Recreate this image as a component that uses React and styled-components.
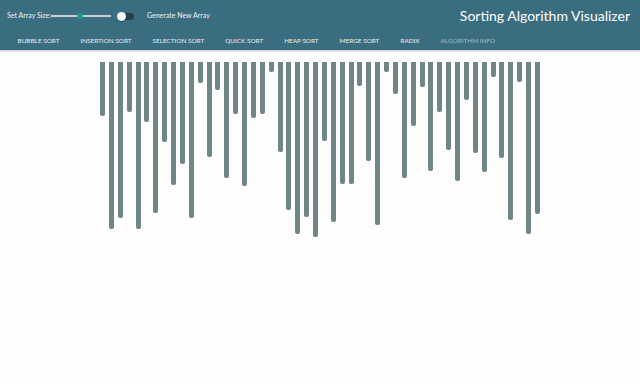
import styled, { createGlobalStyle } from "styled-components";

const GlobalStyle = createGlobalStyle`
  body {
    margin: 0;
    background: #fdfdfd;
    font-family: "Lato", "Open Sans", sans-serif;
  }
`;

const HEIGHTS = [
  54, 167, 156, 50, 167, 60, 151, 80, 123, 102, 156, 21, 95, 28, 116, 52,
  124, 56, 52, 10, 90, 148, 172, 155, 175, 79, 160, 122, 122, 24, 99, 163, 10,
  32, 116, 64, 25, 109, 50, 88, 119, 38, 91, 110, 15, 96, 158, 20, 172, 152,
];

const TABS = [
  "Bubble Sort",
  "Insertion Sort",
  "Selection Sort",
  "Quick Sort",
  "Heap Sort",
  "Merge Sort",
  "Radix",
];

const Header = styled.header`
  height: 50px;
  background-color: #3b6d80;
  box-shadow: 0 1px 2px rgba(0, 0, 0, 0.25);
  display: flex;
  flex-direction: column;
  color: #fff;
`;

const TopRow = styled.div`
  height: 30px;
  display: flex;
  align-items: center;
  padding: 0 10px 0 7px;
`;

const Label = styled.span`
  font-size: 7px;
  color: #eef3f5;
  white-space: nowrap;
`;

const Slider = styled.div`
  position: relative;
  width: 60px;
  height: 2px;
  margin: 2px 0 0 0;
  background: #c9d3d6;
`;

const Thumb = styled.span`
  position: absolute;
  top: -2px;
  left: ${(p) => p.$pos}px;
  width: 6px;
  height: 6px;
  border-radius: 50%;
  background: #1f9c8c;
`;

const Toggle = styled.div`
  position: relative;
  width: 16px;
  height: 7px;
  margin: 2px 0 0 7px;
  border-radius: 4px;
  background: #24414b;
`;

const Knob = styled.span`
  position: absolute;
  top: -1px;
  left: -1px;
  width: 9px;
  height: 9px;
  border-radius: 50%;
  background: #fafafa;
  box-shadow: 0 1px 1px rgba(0, 0, 0, 0.3);
`;

const Generate = styled(Label)`
  margin-left: 13px;
`;

const Title = styled.h1`
  margin: 0 0 0 auto;
  font-size: 14px;
  font-weight: 400;
  color: #fff;
  padding-top: 1px;
`;

const Tabs = styled.nav`
  flex: 1;
  display: flex;
  align-items: center;
  padding: 0 7px;
`;

const Tab = styled.span`
  padding: 0 10.5px;
  font-size: 6.4px;
  text-transform: uppercase;
  color: ${(p) => (p.$dim ? "#a7bec6" : "#e8eff2")};
  white-space: nowrap;
`;

const Bars = styled.main`
  width: 440px;
  margin: 12px auto 0;
  display: flex;
  justify-content: space-between;
  align-items: flex-start;
`;

const Bar = styled.div`
  width: 5px;
  background-color: #708585;
  border-radius: 0 0 2px 2px;
`;

export default function App() {
  return (
    <>
      <GlobalStyle />
      <Header>
        <TopRow>
          <Label>Set Array Size:</Label>
          <Slider>
            <Thumb $pos={26} />
          </Slider>
          <Toggle>
            <Knob />
          </Toggle>
          <Generate>Generate New Array</Generate>
          <Title>Sorting Algorithm Visualizer</Title>
        </TopRow>
        <Tabs>
          {TABS.map((t) => (
            <Tab key={t}>{t}</Tab>
          ))}
          <Tab $dim>Algorithm Info</Tab>
        </Tabs>
      </Header>
      <Bars>
        {HEIGHTS.map((h, i) => (
          <Bar key={i} style={{ height: h }} />
        ))}
      </Bars>
    </>
  );
}
